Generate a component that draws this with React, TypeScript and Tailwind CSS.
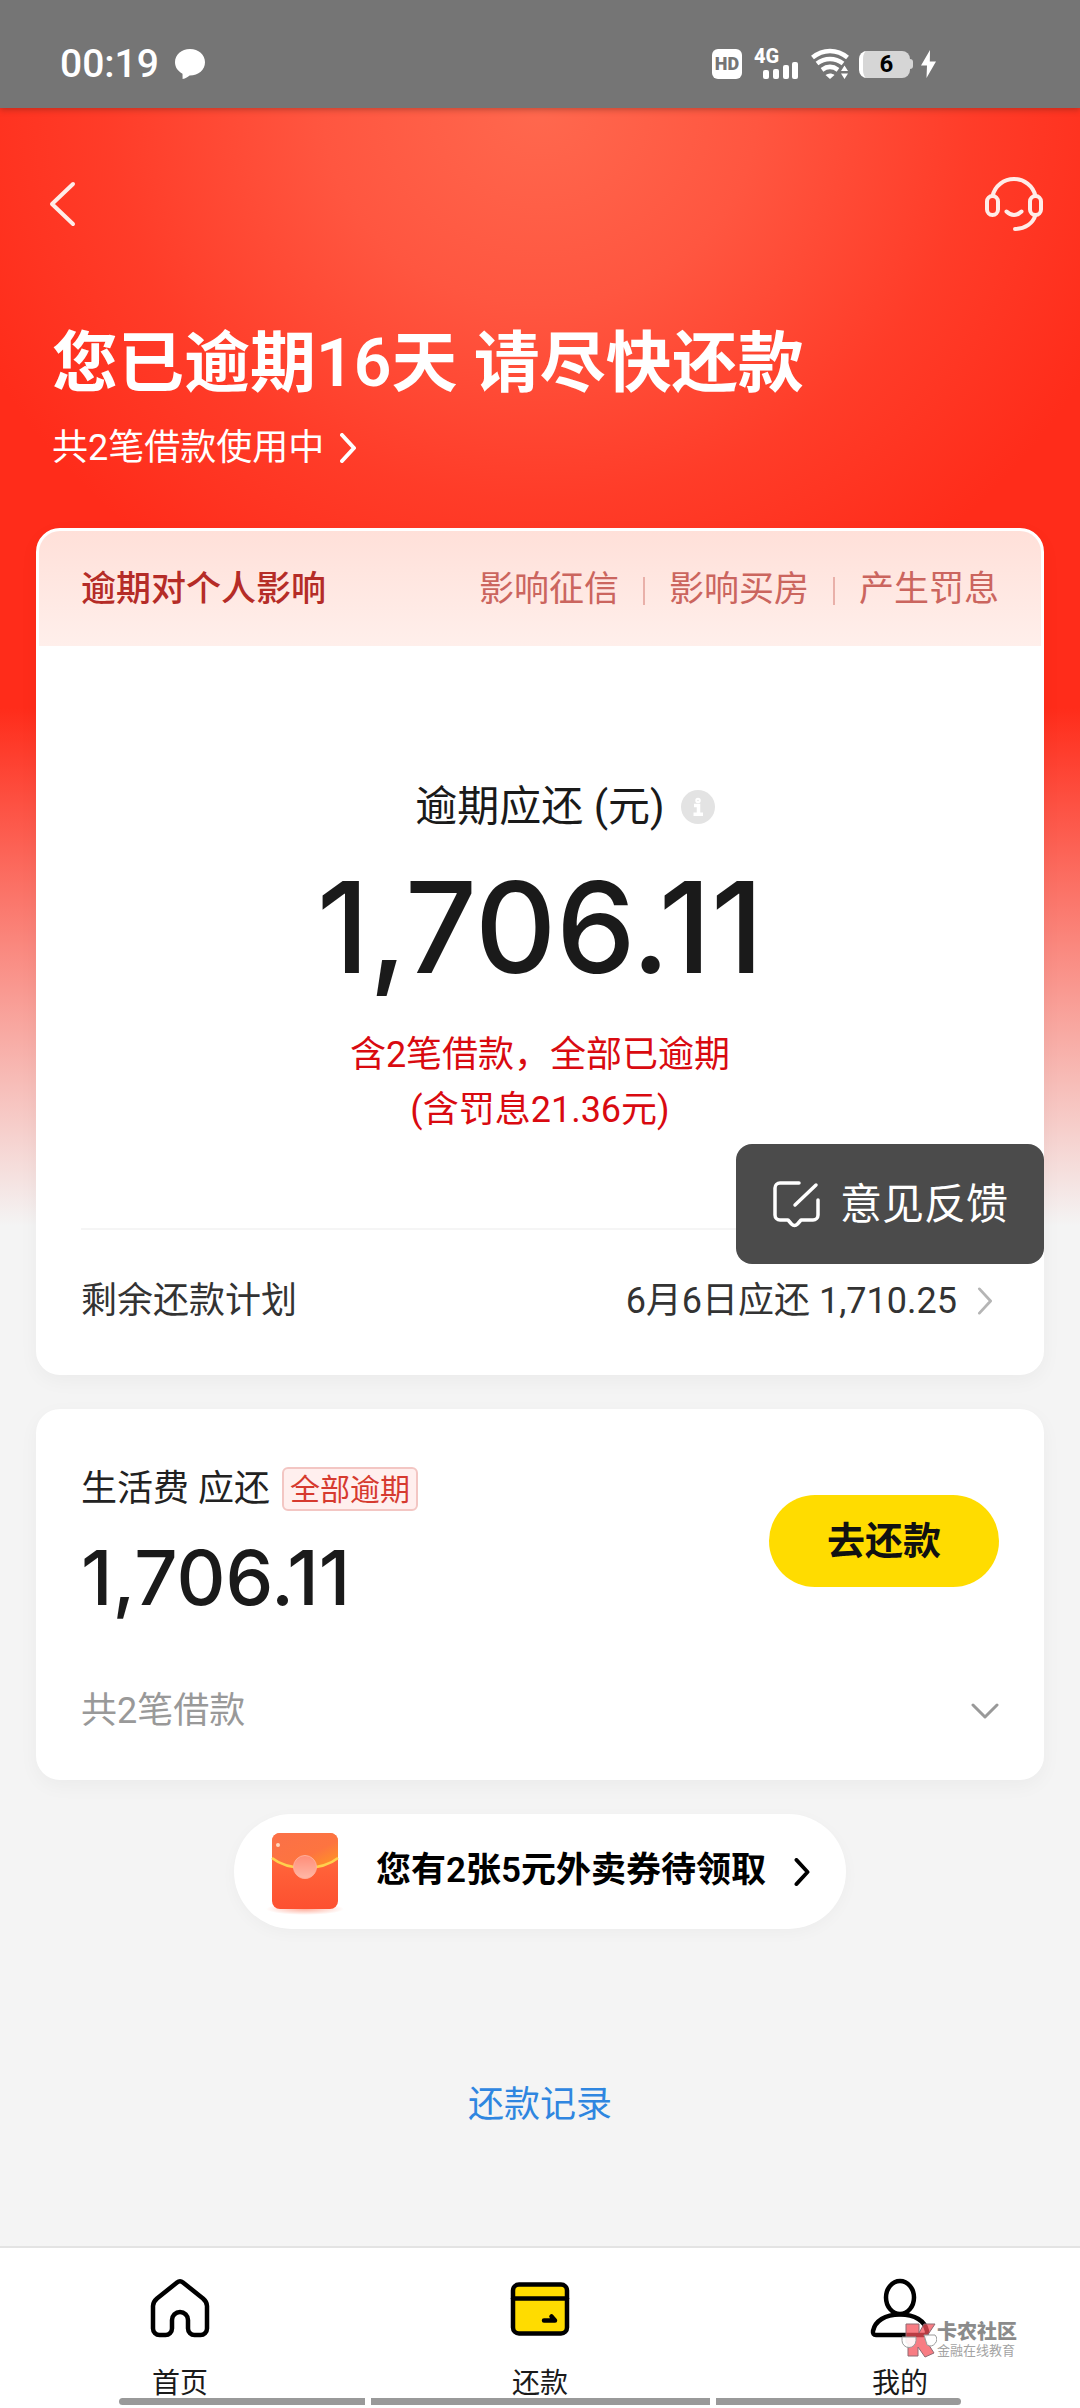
import type { ReactNode } from "react";

const impacts = ["影响征信", "影响买房", "产生罚息"];

function Chevron({ className, d = "M2 2 L14 15 L2 28", box = "0 0 16 30", width = 3 }: {
    className?: string;
    d?: string;
    box?: string;
    width?: number;
}) {
    return (
        <svg
            viewBox={box}
            fill="none"
            stroke="currentColor"
            strokeWidth={width}
            strokeLinecap="round"
            strokeLinejoin="round"
            aria-hidden="true"
            className={className}
        >
            <path d={d} />
        </svg>
    );
}

function StatusBar() {
    return (
        <div className="relative flex h-27 items-center justify-between bg-[#757575] pt-5 pr-36 pl-15 text-white shadow-[0_2px_6px_rgba(80,30,20,0.35)]">
            <div className="flex items-center gap-4">
                <span className="text-[39px] leading-10 font-medium">00:19</span>
                <svg viewBox="0 0 30 30" className="size-[30px]" aria-hidden="true">
                    <path fill="currentColor" d="M15 0C6.500 0 0 5.800 0 13.300c0 5 2.900 9 7.500 11.400L7.600 30c3.200-.6 5.400-2 7-3.500C23.500 26.600 30 21 30 13.300 30 5.800 23.500 0 15 0Z" />
                </svg>
            </div>
            <div className="flex items-center">
                <span className="flex size-[30px] items-center justify-center rounded-md bg-white text-[18px] leading-none font-black text-[#757575]">
                    HD
                </span>
                <div className="relative ml-3 h-8 w-[46px]">
                    <span className="absolute -top-0.5 left-0 text-[20px] leading-5 font-extrabold">4G</span>
                    <svg viewBox="0 0 46 32" className="h-8 w-[46px]" fill="currentColor" aria-hidden="true">
                        <rect x="9" y="22" width="6" height="9" rx="2" />
                        <rect x="19" y="21" width="6" height="10" rx="2" />
                        <rect x="29" y="17" width="6" height="14" rx="2" />
                        <rect x="38" y="14" width="6" height="17" rx="2" />
                    </svg>
                </div>
                <svg viewBox="0 0 40 32" className="ml-[11px] h-8 w-10" aria-hidden="true">
                    <g fill="none" stroke="currentColor" strokeWidth="4.500">
                        <path d="M1.500 9.500C12 .8 26 .8 36.500 9.500" />
                        <path d="M6 15.500c8-6 18-6 26 0" />
                        <path d="M11 21.800c5-3.600 11-3.600 16 0" />
                    </g>
                    <g fill="currentColor">
                        <path d="M14.500 27c2.800-2 6.200-2 9 0L19 31Z" />
                        <path d="M30 23h7l-3.500-5.500ZM30 25.500h7L33.500 31Z" />
                    </g>
                </svg>
                <div className="ml-2 flex items-center">
                    <span className="flex h-[27px] w-[51px] items-center justify-center rounded-lg border-l-4 border-white bg-[#d6d6d6] text-[24px] leading-none font-bold text-black">
                        6
                    </span>
                    <span className="h-2.5 w-[3px] rounded-r-sm bg-[#d6d6d6]" />
                </div>
                <svg viewBox="0 0 15 28" className="ml-2 h-7 w-[15px]" aria-hidden="true">
                    <path fill="currentColor" d="M9 0 0 15.500h6L5.500 28 15 11.500H8.800Z" />
                </svg>
            </div>
        </div>
    );
}

function Headset() {
    return (
        <svg viewBox="0 0 60 56" className="h-14 w-15" fill="none" stroke="currentColor" strokeWidth="4" strokeLinecap="round" aria-hidden="true">
            <path d="M8.500 20C11 9.500 20 3 30 3s19 6.500 21.500 17" />
            <rect x="3" y="20" width="11" height="19" rx="5.500" />
            <rect x="46" y="20" width="11" height="19" rx="5.500" />
            <path d="M51.500 39C49 47.500 41 53 31 53" />
            <path d="M22.500 35.500c4.500 4.500 10.500 4.500 15 0" />
        </svg>
    );
}

function RedPacket() {
    return (
        <svg viewBox="0 0 78 88" className="h-[88px] w-[78px]" aria-hidden="true">
            <defs>
                <linearGradient id="packet" x1="0" y1="0" x2="0" y2="1">
                    <stop offset="0" stopColor="#ff7a45" />
                    <stop offset="0.5" stopColor="#ff6038" />
                    <stop offset="1" stopColor="#fd5030" />
                </linearGradient>
                <linearGradient id="flap" x1="0" y1="0" x2="1" y2="1">
                    <stop offset="0" stopColor="#fb7048" />
                    <stop offset="0.6" stopColor="#fd7440" />
                    <stop offset="1" stopColor="#ff9a20" />
                </linearGradient>
                <linearGradient id="seal" x1="0" y1="0" x2="0" y2="1">
                    <stop offset="0" stopColor="#ff8d78" />
                    <stop offset="1" stopColor="#ffb7a6" />
                </linearGradient>
                <radialGradient id="glow">
                    <stop offset="0" stopColor="#ff8a70" stopOpacity="0.7" />
                    <stop offset="1" stopColor="#ff8a70" stopOpacity="0" />
                </radialGradient>
            </defs>
            <ellipse cx="39" cy="81" rx="39" ry="6" fill="url(#glow)" />
            <rect x="6" y="5" width="66" height="76" rx="8" fill="url(#packet)" />
            <path d="M6 30V13a8 8 0 0 1 8-8h50a8 8 0 0 1 8 8v17C56 43 22 43 6 30Z" fill="url(#flap)" />
            <path d="M6 30C22 43 56 43 72 30" fill="none" stroke="#ffd04e" strokeWidth="2.500" />
            <circle cx="39" cy="39" r="11.500" fill="url(#seal)" stroke="#ffae98" strokeWidth="1" />
            <circle cx="12" cy="17" r="2" fill="#ffd7bd" />
        </svg>
    );
}

function Watermark() {
    return (
        <div className="pointer-events-none absolute top-[73px] right-[63px] flex items-center text-[#8b8b8b]">
            <svg viewBox="0 0 36 38" className="h-[38px] w-9" aria-hidden="true">
                <path
                    d="M5 3h13v9l5-9h11L24 18l9 14-9 4-7-10v9H7V22H5Z"
                    fill="#f6505a"
                    fillOpacity="0.75"
                    stroke="#8f6a72"
                    strokeWidth="1"
                />
                <path d="M1 16h14v3.500a7 7 0 0 1-14 0ZM23 14h11a6.500 6.500 0 0 1-8 10Z" fill="#fff" fillOpacity="0.9" stroke="#9a9a9a" strokeWidth="1" />
            </svg>
            <div>
                <p className="text-[20px] leading-[22px] font-black">卡农社区</p>
                <p className="text-[13px] leading-4 text-[#a3a3a3]">金融在线教育</p>
            </div>
        </div>
    );
}

function Tab({ label, children }: { label: string; children: ReactNode }) {
    return (
        <a href="#" className="flex flex-1 flex-col items-center gap-[26px] pt-[30px] pb-1 text-[28px] leading-10 text-[#1a1a1a]">
            <svg viewBox="0 0 60 60" className="size-15" fill="none" stroke="#000" strokeWidth="4.500" strokeLinejoin="round" strokeLinecap="round" aria-hidden="true">
                {children}
            </svg>
            {label}
        </a>
    );
}

export default function App() {
    return (
        <div className="flex min-h-screen flex-col bg-[#f4f4f4] font-[Roboto,'Noto_Sans_CJK_SC',sans-serif] text-[#1a1a1a]">
            <StatusBar />

            <main className="flex-1 bg-[radial-gradient(ellipse_620px_560px_at_50%_0,#ff684e_0%,#ff5640_35%,rgba(255,64,44,0.8)_70%,rgba(255,44,26,0)_100%),linear-gradient(180deg,#ff2c1a_0,#ff2c1a_600px,#f4f4f4_1118px)] px-9 pt-16">
                <header className="text-white">
                    <div className="flex h-16 items-center justify-between">
                        <button aria-label="返回" className="px-3 text-[#ffece8]">
                            <Chevron className="h-[46px] w-7" box="0 0 28 46" d="M25 3 4 23 25 43" width={4} />
                        </button>
                        <button aria-label="客服" className="text-[#ffece8]">
                            <Headset />
                        </button>
                    </div>
                    <div className="mt-22 pl-4">
                        <h1 className="text-[66px] leading-20 font-semibold">您已逾期16天 请尽快还款</h1>
                        <a href="#" className="mt-5 flex items-center gap-4 text-[36px] leading-12">
                            共2笔借款使用中
                            <Chevron className="h-[30px] w-4" width={4} />
                        </a>
                    </div>
                </header>

                <section className="relative mt-14 rounded-3xl border-3 border-white bg-white shadow-[0_6px_20px_rgba(0,0,0,0.04)]">
                    <div className="flex h-[115px] items-center justify-between rounded-t-[21px] bg-linear-to-b from-[#ffe0d9] to-[#ffefeb] px-[42px] pt-1 text-[35px]">
                        <h2 className="font-medium text-[#b52c27]">逾期对个人影响</h2>
                        <ul className="flex items-center text-[#cb655e]">
                            {impacts.map((item, i) => (
                                <li key={item} className="flex items-center">
                                    {i > 0 && <span className="mx-6 h-7 w-0.5 bg-[#e9b0a9]" />}
                                    {item}
                                </li>
                            ))}
                        </ul>
                    </div>

                    <div className="px-[42px] pt-[133px] text-center">
                        <p className="text-[42px] leading-14">
                            <span className="relative">
                                逾期应还 (元)
                                <button
                                    aria-label="说明"
                                    className="absolute top-1/2 left-full ml-4 flex size-[34px] -translate-y-1/2 items-center justify-center rounded-full bg-[#e3e3e3] text-white"
                                >
                                    <svg viewBox="0 0 34 34" className="size-[34px]" fill="none" stroke="currentColor" strokeWidth="3.500" aria-hidden="true">
                                        <path d="M13 15.500h4.500V24M12.500 24.200h9.500" />
                                        <circle cx="17" cy="10.500" r="1" />
                                    </svg>
                                </button>
                            </span>
                        </p>
                        <p className="mt-8 font-[Inter,sans-serif] text-[126px] leading-30 font-medium">1,706.11</p>
                        <p className="mt-[41px] text-[36px] leading-[55px] text-[#d90a10]">
                            含2笔借款，全部已逾期
                            <br />
                            (含罚息21.36元)
                        </p>
                    </div>

                    <a href="#" className="mx-[42px] mt-[90px] flex h-36 items-center border-t-2 border-[#f5f5f5] text-[36px] text-[#333]">
                        <span>剩余还款计划</span>
                        <span className="ml-auto">6月6日应还 1,710.25</span>
                        <Chevron className="mr-1.5 ml-5 h-7 w-4 text-[#b5b5b5]" />
                    </a>

                    <button className="absolute top-[613px] -right-[3px] flex h-30 items-center gap-5 rounded-2xl bg-[#4b4b4b] px-9 text-[42px] text-white">
                        <svg viewBox="0 0 48 48" className="size-12" fill="none" stroke="currentColor" strokeWidth="3.500" strokeLinecap="round" strokeLinejoin="round" aria-hidden="true">
                            <path d="M27 3H8a5 5 0 0 0-5 5v27a5 5 0 0 0 5 5h8l3.500 4q3 3 6 0L29 40h12a5 5 0 0 0 5-5V20" />
                            <path d="M44 5 23 25" />
                        </svg>
                        意见反馈
                    </button>
                </section>

                <section className="mt-[34px] rounded-3xl bg-white px-[45px] pt-[58px] pb-[45px] shadow-[0_6px_20px_rgba(0,0,0,0.04)]">
                    <div className="flex items-center justify-between">
                        <div>
                            <div className="flex items-center gap-3">
                                <h2 className="text-[36px] leading-11 text-[#222]">生活费 应还</h2>
                                <span className="flex h-11 items-center rounded-md border-2 border-[#f3c6c3] bg-[#ffefee] px-1.5 text-[30px] text-[#d63a2f]">
                                    全部逾期
                                </span>
                            </div>
                            <p className="mt-7 font-[Inter,sans-serif] text-[76px] leading-[76px] font-medium">1,706.11</p>
                        </div>
                        <button className="h-[92px] rounded-full bg-[#ffdc00] px-[58px] text-[38px] font-semibold text-[#111]">
                            去还款
                        </button>
                    </div>
                    <button className="mt-18 flex w-full items-center justify-between text-[36px] leading-12 text-[#999]">
                        共2笔借款
                        <Chevron className="h-4 w-7" box="0 0 28 16" d="M2 2 14 14 26 2" />
                    </button>
                </section>

                <div className="mt-[34px] flex justify-center">
                    <a
                        href="#"
                        className="flex h-[115px] items-center rounded-full bg-white pr-9 pl-8 text-[35px] font-semibold text-black shadow-[0_4px_16px_rgba(0,0,0,0.03)]"
                    >
                        <RedPacket />
                        <span className="mr-7 ml-8">您有2张5元外卖券待领取</span>
                        <Chevron className="h-7 w-4" width={4} />
                    </a>
                </div>

                <div className="mt-[152px] pb-20 text-center">
                    <a href="#" className="text-[36px] leading-12 text-[#2f86e0]">还款记录</a>
                </div>
            </main>

            <nav className="relative flex border-t-2 border-[#e3e3e3] bg-white">
                <Tab label="首页">
                    <path d="M27 4.500 7 20.500Q3 24 3 28v22.500a6.500 6.500 0 0 0 6.500 6.500h6a6.500 6.500 0 0 0 6.500-6.500V42a8 8 0 0 1 16 0v8.500a6.500 6.500 0 0 0 6.500 6.500h6a6.500 6.500 0 0 0 6.500-6.500V28q0-4-4-7.500L33 4.500q-3-2.500-6 0Z" />
                </Tab>
                <Tab label="还款">
                    <rect x="3" y="6.500" width="54" height="49" rx="6" fill="#ffdc00" />
                    <path d="M3 20.500h54" />
                    <path d="M34 42.500h11l-3.500-4" />
                </Tab>
                <Tab label="我的">
                    <ellipse cx="30" cy="19.500" rx="14" ry="16.500" />
                    <path d="M6 57h48q3.500 0 3-4C55 43 45 36.500 30 36.500S5 43 3 53q-.5 4 3 4Z" />
                </Tab>
                <Watermark />
                <div className="absolute inset-x-[11%] bottom-[3px] flex h-[7px] gap-1.5">
                    <span className="flex-[245] rounded-l-full bg-[#999]" />
                    <span className="flex-[338] bg-[#999]" />
                    <span className="flex-[245] rounded-r-full bg-[#999]" />
                </div>
            </nav>
        </div>
    );
}
